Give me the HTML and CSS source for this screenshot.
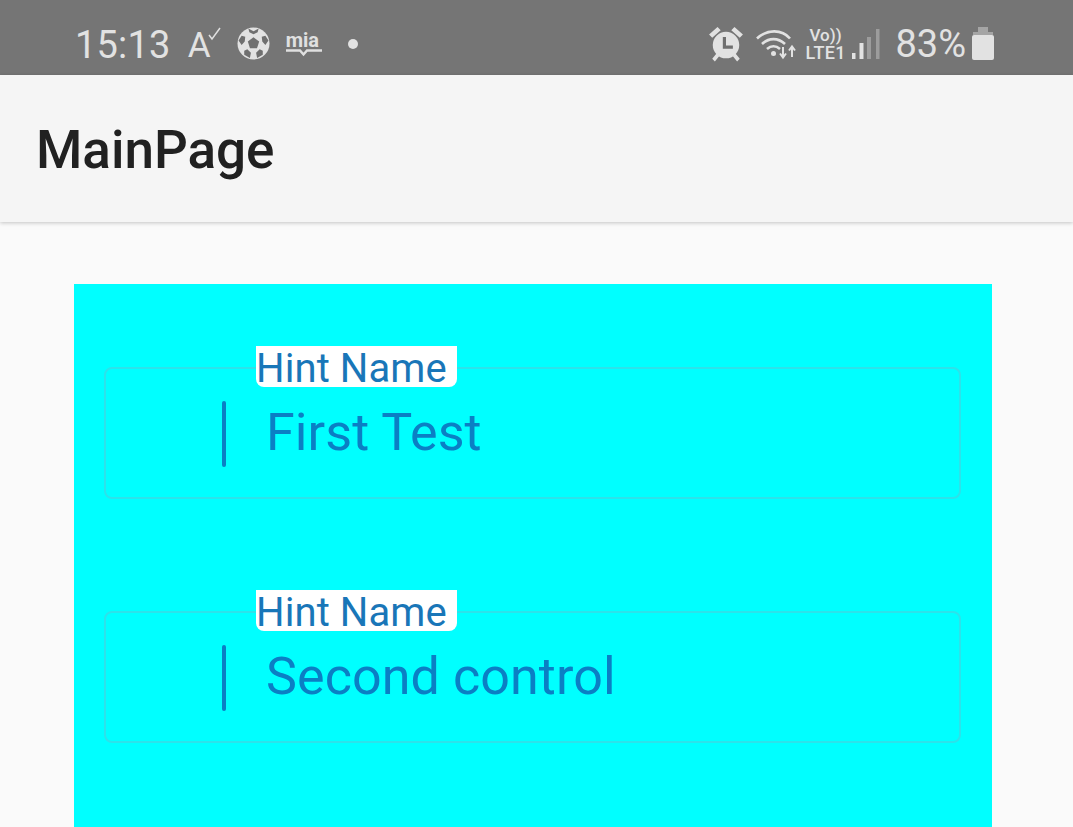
FILE: index.html
```html
<!DOCTYPE html>
<html lang="en">
<head>
<meta charset="utf-8">
<title>MainPage</title>
<link rel="stylesheet" href="styles.css">
</head>
<body>
<div class="status">
  <div class="status-left">
    <span class="time">15:13</span>
    <span class="a-icon">A<svg class="check" viewBox="0 0 14 14"><path d="M1 8l3 4 8-11" fill="none" stroke="#e0e0e0" stroke-width="1.500"/></svg></span>
    <svg class="ball" viewBox="0 0 32 32">
      <circle cx="16" cy="16" r="15.500" fill="#e2e2e2"/>
      <path d="M16 10l5.500 4-2.100 6.500h-6.800L10.500 14z" fill="#6f6f6f"/>
      <path d="M11 1.500L16 4l5-2.500-1 3.500-4 2-4-2z M1.500 13l3-4.500 3.500 1-.5 4.500-3 3.500z M30.500 13l-3-4.500-3.500 1 .5 4.500 3 3.500z M7 27l0-4 3-1.500 3.500 3.500-1 5z M25 27l0-4-3-1.500-3.500 3.500 1 5z" fill="#6f6f6f"/>
    </svg>
    <span class="mia">mia<svg class="mia-line" viewBox="0 0 36 9"><path d="M0 2.500h14l3.500 4 3.500-4h15" fill="none" stroke="#e0e0e0" stroke-width="2.400"/></svg></span>
    <span class="dot"></span>
  </div>
  <div class="status-right">
    <svg class="alarm" viewBox="1 0 32 34">
      <circle cx="17" cy="18" r="12.500" fill="#e2e2e2"/>
      <path d="M1 8l8-7 3 3-8 7z M33 8l-8-7-3 3 8 7z M4 31l4-5 2.500 2.500-4 5z M30 31l-4-5-2.500 2.500 4 5z" fill="#e2e2e2"/>
      <path d="M15.500 10.500v9.500h8" fill="none" stroke="#6f6f6f" stroke-width="3"/>
    </svg>
    <svg class="wifi" viewBox="0 0 42 32">
      <path d="M2 10.500C12 1 27 1 35 10.500M7 16c7-6.500 16-6.500 23 0M12 21c4-3.500 9-3.500 13 0" fill="none" stroke="#e2e2e2" stroke-width="2.600"/>
      <circle cx="18.500" cy="25.500" r="2.500" fill="#e2e2e2"/>
      <path d="M28 19v10M25 25.500l3 4 3-4M37 29V19M34 22.500l3-4 3 4" fill="none" stroke="#e2e2e2" stroke-width="2"/>
    </svg>
    <span class="volte"><span class="vo">Vo))</span><span class="lte">LTE1</span></span>
    <svg class="signal" viewBox="0 0 28 30">
      <rect x="0" y="24" width="3.500" height="6" fill="#e2e2e2"/>
      <rect x="7.500" y="14" width="4" height="16" fill="#e2e2e2"/>
      <rect x="15" y="8" width="4" height="22" fill="#9c9c9c"/>
      <rect x="24" y="0" width="3.500" height="30" fill="#9c9c9c"/>
    </svg>
    <span class="percent">83%</span>
    <svg class="battery" viewBox="0 0 22 33">
      <path d="M6 0h10v5H6z" fill="#a5a5a5"/>
      <path d="M1 5h20v3H1z" fill="#a5a5a5"/>
      <rect x="0" y="8" width="22" height="25" rx="2" fill="#e2e2e2"/>
    </svg>
  </div>
</div>
<header class="appbar"><h1 class="title">MainPage</h1></header>
<main class="content">
  <section class="panel">
    <div class="field">
      <span class="hint">Hint Name</span>
      <span class="cursor"></span>
      <span class="value">First Test</span>
    </div>
    <div class="field">
      <span class="hint">Hint Name</span>
      <span class="cursor"></span>
      <span class="value">Second control</span>
    </div>
  </section>
</main>
</body>
</html>
```

FILE: styles.css
```css
html, body {
  margin: 0;
  height: 827px;
  overflow: hidden;
  background: #fafafa;
  font-family: Roboto, "Liberation Sans", sans-serif;
}
.status {
  height: 75px;
  background: #757575;
  display: flex;
  justify-content: space-between;
  align-items: center;
  padding: 12px 79px 0 75px;
  box-sizing: border-box;
  color: #e2e2e2;
}
.status-left, .status-right { display: flex; align-items: center; }
.time { font-size: 38px; font-weight: 400; letter-spacing: 0.2px; margin-right: 17px; line-height: 44px; margin-top: 2px; }
.a-icon { position: relative; font-size: 35px; font-weight: 400; width: 34px; line-height: 40px; margin-right: 15px; margin-top: 4px; }
.check { position: absolute; left: 20px; top: 1px; width: 14px; height: 14px; }
.ball { width: 33px; height: 33px; margin-right: 16px; }
.mia { position: relative; font-size: 20px; font-weight: 700; width: 36px; line-height: 22px; height: 34px; letter-spacing: 0; color: #e0e0e0; margin-right: 26px; margin-top: 4px; }
.mia-line { position: absolute; left: 0; top: 19px; width: 36px; height: 9px; }
.dot { width: 10px; height: 10px; border-radius: 50%; background: #e2e2e2; }
.alarm { width: 34px; height: 36px; margin-right: 12px; }
.wifi { width: 42px; height: 32px; margin-right: 8px; }
.volte { display: flex; flex-direction: column; width: 41px; color: #e2e2e2; margin-right: 6px; }
.vo { font-size: 17px; font-weight: 500; line-height: 18px; padding-left: 4px; }
.lte { font-size: 18px; font-weight: 500; line-height: 18px; letter-spacing: 0.4px; }
.signal { width: 28px; height: 30px; margin-right: 15px; }
.percent { font-size: 38px; font-weight: 400; letter-spacing: 0; line-height: 44px; margin-right: 6px; }
.battery { width: 22px; height: 33px; }
.appbar {
  height: 147px;
  background: #f5f5f5;
  box-shadow: 0 1px 4px rgba(0, 0, 0, 0.22);
  display: flex;
  align-items: center;
  padding: 3px 0 0 36px;
  box-sizing: border-box;
  position: relative;
}
.title { margin: 0; font-size: 53px; font-weight: 500; color: #212121; line-height: 62px; }
.content { padding: 62px 81px 0 74px; }
.panel {
  background: #00ffff;
  height: 560px;
  padding: 83px 31px 0 30px;
  box-sizing: border-box;
  display: flex;
  flex-direction: column;
  gap: 112px;
}
.field {
  position: relative;
  height: 132px;
  box-sizing: border-box;
  border: 2px solid #2de2ea;
  border-radius: 8px;
  display: flex;
  align-items: flex-start;
  padding: 32px 0 0 116px;
}
.hint {
  position: absolute;
  left: 150px;
  top: -23px;
  width: 201px;
  height: 41px;
  background: #fff;
  border-radius: 0 0 8px 8px;
  color: #1976b8;
  font-size: 40px;
  line-height: 46px;
  letter-spacing: 0.1px;
  box-sizing: border-box;
}
.cursor { width: 4px; height: 66px; background: #0b7fc4; border-radius: 2px; margin-right: 40px; }
.value { font-size: 52px; line-height: 62px; margin-top: 1px; color: #0b7fc4; letter-spacing: 0.1px; }
```
